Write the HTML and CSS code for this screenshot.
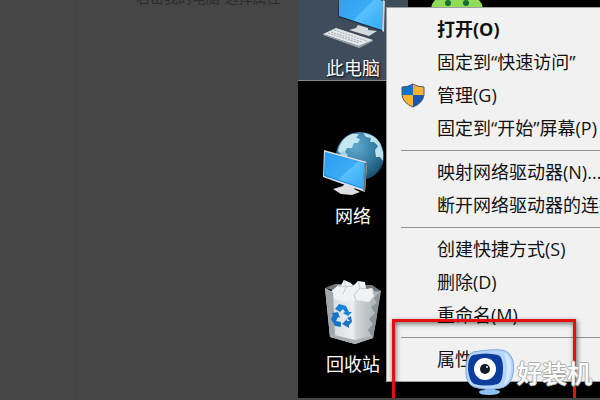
FILE: index.html
```html
<!DOCTYPE html>
<html lang="zh-CN">
<head>
    <meta charset="utf-8">
    <title>右击我的电脑-选择属性</title>
    <link rel="stylesheet" href="styles.css">
</head>
<body>
    <div class="page">
        <div class="sidebar"></div>
        <div class="content">
            <p class="step">右击我的电脑-选择属性</p>
        </div>

        <div class="desktop">
            <div class="icons">
                <a class="icon selected" href="#computer">
                    <svg viewBox="0 0 64 70">
                        <defs>
                            <linearGradient id="screen" x1="0" y1="0" x2="1" y2="1">
                                <stop offset="0" stop-color="#2a9df0"/>
                                <stop offset="0.55" stop-color="#3cabf6"/>
                                <stop offset="0.56" stop-color="#58c0fc"/>
                                <stop offset="1" stop-color="#35a8f5"/>
                            </linearGradient>
                        </defs>
                        <path d="M28 48L35 46L37 43L47 46L47 48L56 49L48 54Z" fill="#d5dade"/>
                        <path d="M18 4L64 19L63 50L17 35Z" fill="#1d2f40"/>
                        <path d="M18 4L62 19L61 48L18 34Z" fill="url(#screen)"/>
                        <path d="M62 18L64 19L63 50L61 49Z" fill="#c9d3da"/>
                        <path d="M2 52L15 46L52 58L38 64Z" fill="#e4e7e9"/>
                        <path d="M2 52L38 64L52 58V59L38 66L2 53Z" fill="#9aa4ac"/>
                        <path d="M7 51L38 61M10 50L41 60M13 48L46 59" stroke="#a4adb4" stroke-width="1" stroke-dasharray="2 1" fill="none"/>
                    </svg>
                    <span>此电脑</span>
                </a>
                <a class="icon" href="#network">
                    <svg viewBox="0 0 64 70">
                        <defs>
                            <radialGradient id="globe" cx="0.4" cy="0.3" r="0.75">
                                <stop offset="0" stop-color="#5fa9cf"/>
                                <stop offset="0.6" stop-color="#33799f"/>
                                <stop offset="1" stop-color="#174b6b"/>
                            </radialGradient>
                        </defs>
                        <circle cx="39" cy="26" r="24" fill="url(#globe)"/>
                        <path d="M18 17Q22 7 31 4L38 4L35 8L39 9L37 13L33 13L31 18L26 18L24 22L19 23L17 21Z" fill="#c5e5ef"/>
                        <path d="M42 3Q50 4 55 8L59 13L62 22L62 31L59 27L55 27L54 20L57 16L53 12L49 12L50 8L45 7Z" fill="#bde0eb"/>
                        <path d="M19 23L23 21L27 25L25 28L20 26Z" fill="#a8d2e2"/>
                        <path d="M12 59L22 56L25 52L35 56L33 59L39 62L31 65L20 64Z" fill="#dce0e2"/>
                        <path d="M3 20L46 32L44 62L2 47Z" fill="#dde1e4"/>
                        <path d="M4 22L44 33L42 59L3 46Z" fill="#1489dc"/>
                        <path d="M4 22L43 33L42 58L4 45Z" fill="url(#screen)"/>
                        <path d="M44 33L46 32L44 62L42 60Z" fill="#68757f"/>
                    </svg>
                    <span>网络</span>
                </a>
                <a class="icon" href="#recycle-bin">
                    <svg viewBox="0 0 64 70">
                        <defs>
                            <linearGradient id="bin" x1="0" y1="0" x2="1" y2="0">
                                <stop offset="0" stop-color="#d3d6d9"/>
                                <stop offset="0.5" stop-color="#eceeef"/>
                                <stop offset="0.56" stop-color="#d2d6d9"/>
                                <stop offset="1" stop-color="#a5abb0"/>
                            </linearGradient>
                        </defs>
                        <path d="M4 10L14 6L51 7L60 13L34 18Z" fill="#72797e"/>
                        <path d="M9 14L14 10L17 7L19 9L23 2L30 5L32 8L37 3L44 4L45 11L51 10L54 16L34 23L11 20Z" fill="#f3f4f5"/>
                        <path d="M4 10L12 15L24 14L35 18L46 14L60 13L52 60L34 66L9 59Z" fill="url(#bin)"/>
                        <path d="M12 16L17 11L25 13L33 9L42 12L51 12L53 18L48 24L35 22L24 24L13 21Z" fill="#f0f1f2"/>
                        <path d="M23 2L25 9L32 8M17 7L25 9L22 16M37 3L39 10L45 11M39 10L33 17L35 22" stroke="#c7cbce" stroke-width="1" fill="none"/>
                        <path d="M4 10L12 14L14 58L9 59Z" fill="#a2a7ab"/>
                        <path d="M59 14L53 20L56 25L50 29L54 35L48 41L52 46L47 52L52 60L55 44Z" fill="#8b9298"/>
                        <path d="M9 59L34 66L52 60L52 57L34 62L9 56Z" fill="#a9afb3"/>
                        <path d="M14 31L18 26L25 28L28 34L31 34L27 38L22 35L24 34L22 31L19 34Z" fill="#1683d8"/>
                        <path d="M11 35L17 34L19 40L17 39L15 43L20 44V49L14 48L10 41L12 37Z" fill="#1374ca"/>
                        <path d="M26 40L30 38L31 44L28 47V50L21 46L26 41V43L29 43Z" fill="#1976d0"/>
                    </svg>
                    <span>回收站</span>
                </a>
            </div>

            <svg class="android" viewBox="0 0 52 8">
                <path d="M0 8Q1 3 4 0H48Q51 3 52 8Z" fill="#8edb55"/>
                <circle cx="17" cy="3" r="3" fill="#176b35"/>
                <circle cx="35" cy="3" r="3" fill="#176b35"/>
            </svg>

            <div class="menu">
                <button class="default">打开(O)</button>
                <button>固定到“快速访问”</button>
                <button>
                    <svg class="shield" viewBox="0 0 24 25">
                        <path d="M12 1Q7 4 1 4V12Q2 20 12 24Q22 20 23 12V4Q17 4 12 1Z" fill="#f7b52f"/>
                        <path d="M12 1Q7 4 1 4V12H12Z" fill="#1471c8"/>
                        <path d="M12 12H23Q22 20 12 24Z" fill="#1059b4"/>
                        <path d="M12 1Q17 4 23 4V12H12Z" fill="#fbb131"/>
                        <path d="M12 1Q7 4 1 4V12Q2 20 12 24Q22 20 23 12V4Q17 4 12 1Z" fill="none" stroke="#4f5a60" stroke-width="1"/>
                    </svg>
                    管理(G)
                </button>
                <button>固定到“开始”屏幕(P)</button>
                <hr>
                <button>映射网络驱动器(N)...</button>
                <button>断开网络驱动器的连接(C)...</button>
                <hr>
                <button>创建快捷方式(S)</button>
                <button>删除(D)</button>
                <button>重命名(M)</button>
                <hr>
                <button>属性(R)</button>
            </div>

            <div class="highlight"></div>

            <div class="watermark">
                <svg viewBox="0 0 50 47">
                    <path d="M19 39H31L30 41Q35 41 35 43Q34 46 24 46Q14 46 14 43Q14 41 20 41Z" fill="#8fc0f5"/>
                    <path d="M8 3Q25 0 37 1Q45 2 48 12Q50 21 47 29Q44 37 36 39Q22 42 9 38Q2 35 1 25Q0 6 8 3Z" fill="#b5d6fb" stroke="#7fa9dc" stroke-width="1"/>
                    <path d="M39 4Q47 8 46 20Q45 33 38 37Q42 30 42 20Q42 10 39 4Z" fill="#d8eafe"/>
                    <path d="M8 6Q21 3 33 6Q38 8 38 19Q38 33 33 35Q21 38 9 35Q4 32 3 20Q3 8 8 6Z" fill="#0b3e9c"/>
                    <circle cx="20" cy="20" r="11" fill="#fff"/>
                    <circle cx="20" cy="20" r="5" fill="#111c26"/>
                    <circle cx="22" cy="18" r="1" fill="#fff"/>
                </svg>
                <span>好装机</span>
            </div>
        </div>
    </div>
</body>
</html>
```
FILE: styles.css
```css
body {
    margin: 0;
    background: #464646;
    font-family: "Open Sans", "Noto Sans CJK SC", sans-serif;
}

.page {
    display: grid;
    grid-template-columns: 76px 222px 1fr;
    height: 100vh;
    overflow: hidden;
}

.sidebar {
    border-right: 1px solid #424242;
}

.content {
    padding-left: 60px;
}

.step {
    margin: -12px 0 0;
    color: #2e2e2e;
    font-size: 14px;
    line-height: 20px;
    white-space: nowrap;
}

.desktop {
    position: relative;
    overflow: hidden;
    margin-bottom: 2px;
    background: #000;
}

.icons {
    display: flex;
    flex-direction: column;
    gap: 50px;
    width: 110px;
    margin-top: -18px;
}

.icon {
    display: flex;
    flex-direction: column;
    align-items: center;
    gap: 4px;
    color: #fff;
    font-size: 18px;
    line-height: 24px;
    text-decoration: none;
    text-shadow: 1px 1px 2px #000;
}

.icon svg {
    width: 64px;
    height: 70px;
}

.selected {
    background: #3e4c5c;
    box-shadow: 0 1px #848b93;
}

.android {
    position: absolute;
    top: 0;
    left: 133px;
    width: 52px;
    height: 8px;
}

.menu {
    position: absolute;
    top: 7px;
    left: 88px;
    right: -1px;
    padding: 5px 0;
    border: 1px solid #a0a0a0;
    background: #f1f1f1;
    overflow: hidden;
}

.menu button {
    display: block;
    position: relative;
    width: 100%;
    height: 33px;
    padding: 0 0 0 50px;
    border: 0;
    background: none;
    color: #111;
    font-family: inherit;
    font-size: 18px;
    line-height: 33px;
    text-align: left;
    white-space: nowrap;
}

.menu .default {
    font-weight: bold;
}

.menu hr {
    height: 1px;
    margin: 5px 0 5px 14px;
    border: 0;
    background: #919191;
}

.shield {
    position: absolute;
    top: 4px;
    left: 14px;
    width: 24px;
    height: 25px;
}

.highlight {
    position: absolute;
    top: 319px;
    left: 94px;
    width: 178px;
    height: 90px;
    border: 3px solid #e60f0f;
    box-shadow: 1px 2px 5px rgba(0, 0, 0, 0.6), inset 1px 2px 5px rgba(0, 0, 0, 0.5);
}

.watermark {
    position: absolute;
    right: 8px;
    bottom: 2px;
    display: flex;
    align-items: center;
    gap: 2px;
    color: #fff;
    font-size: 25px;
    font-weight: 500;
    line-height: 30px;
    text-shadow: 1px 0 #aaa, -1px 0 #aaa, 0 1px #aaa, 0 -1px #aaa;
}

.watermark svg {
    width: 50px;
    height: 47px;
}
```
